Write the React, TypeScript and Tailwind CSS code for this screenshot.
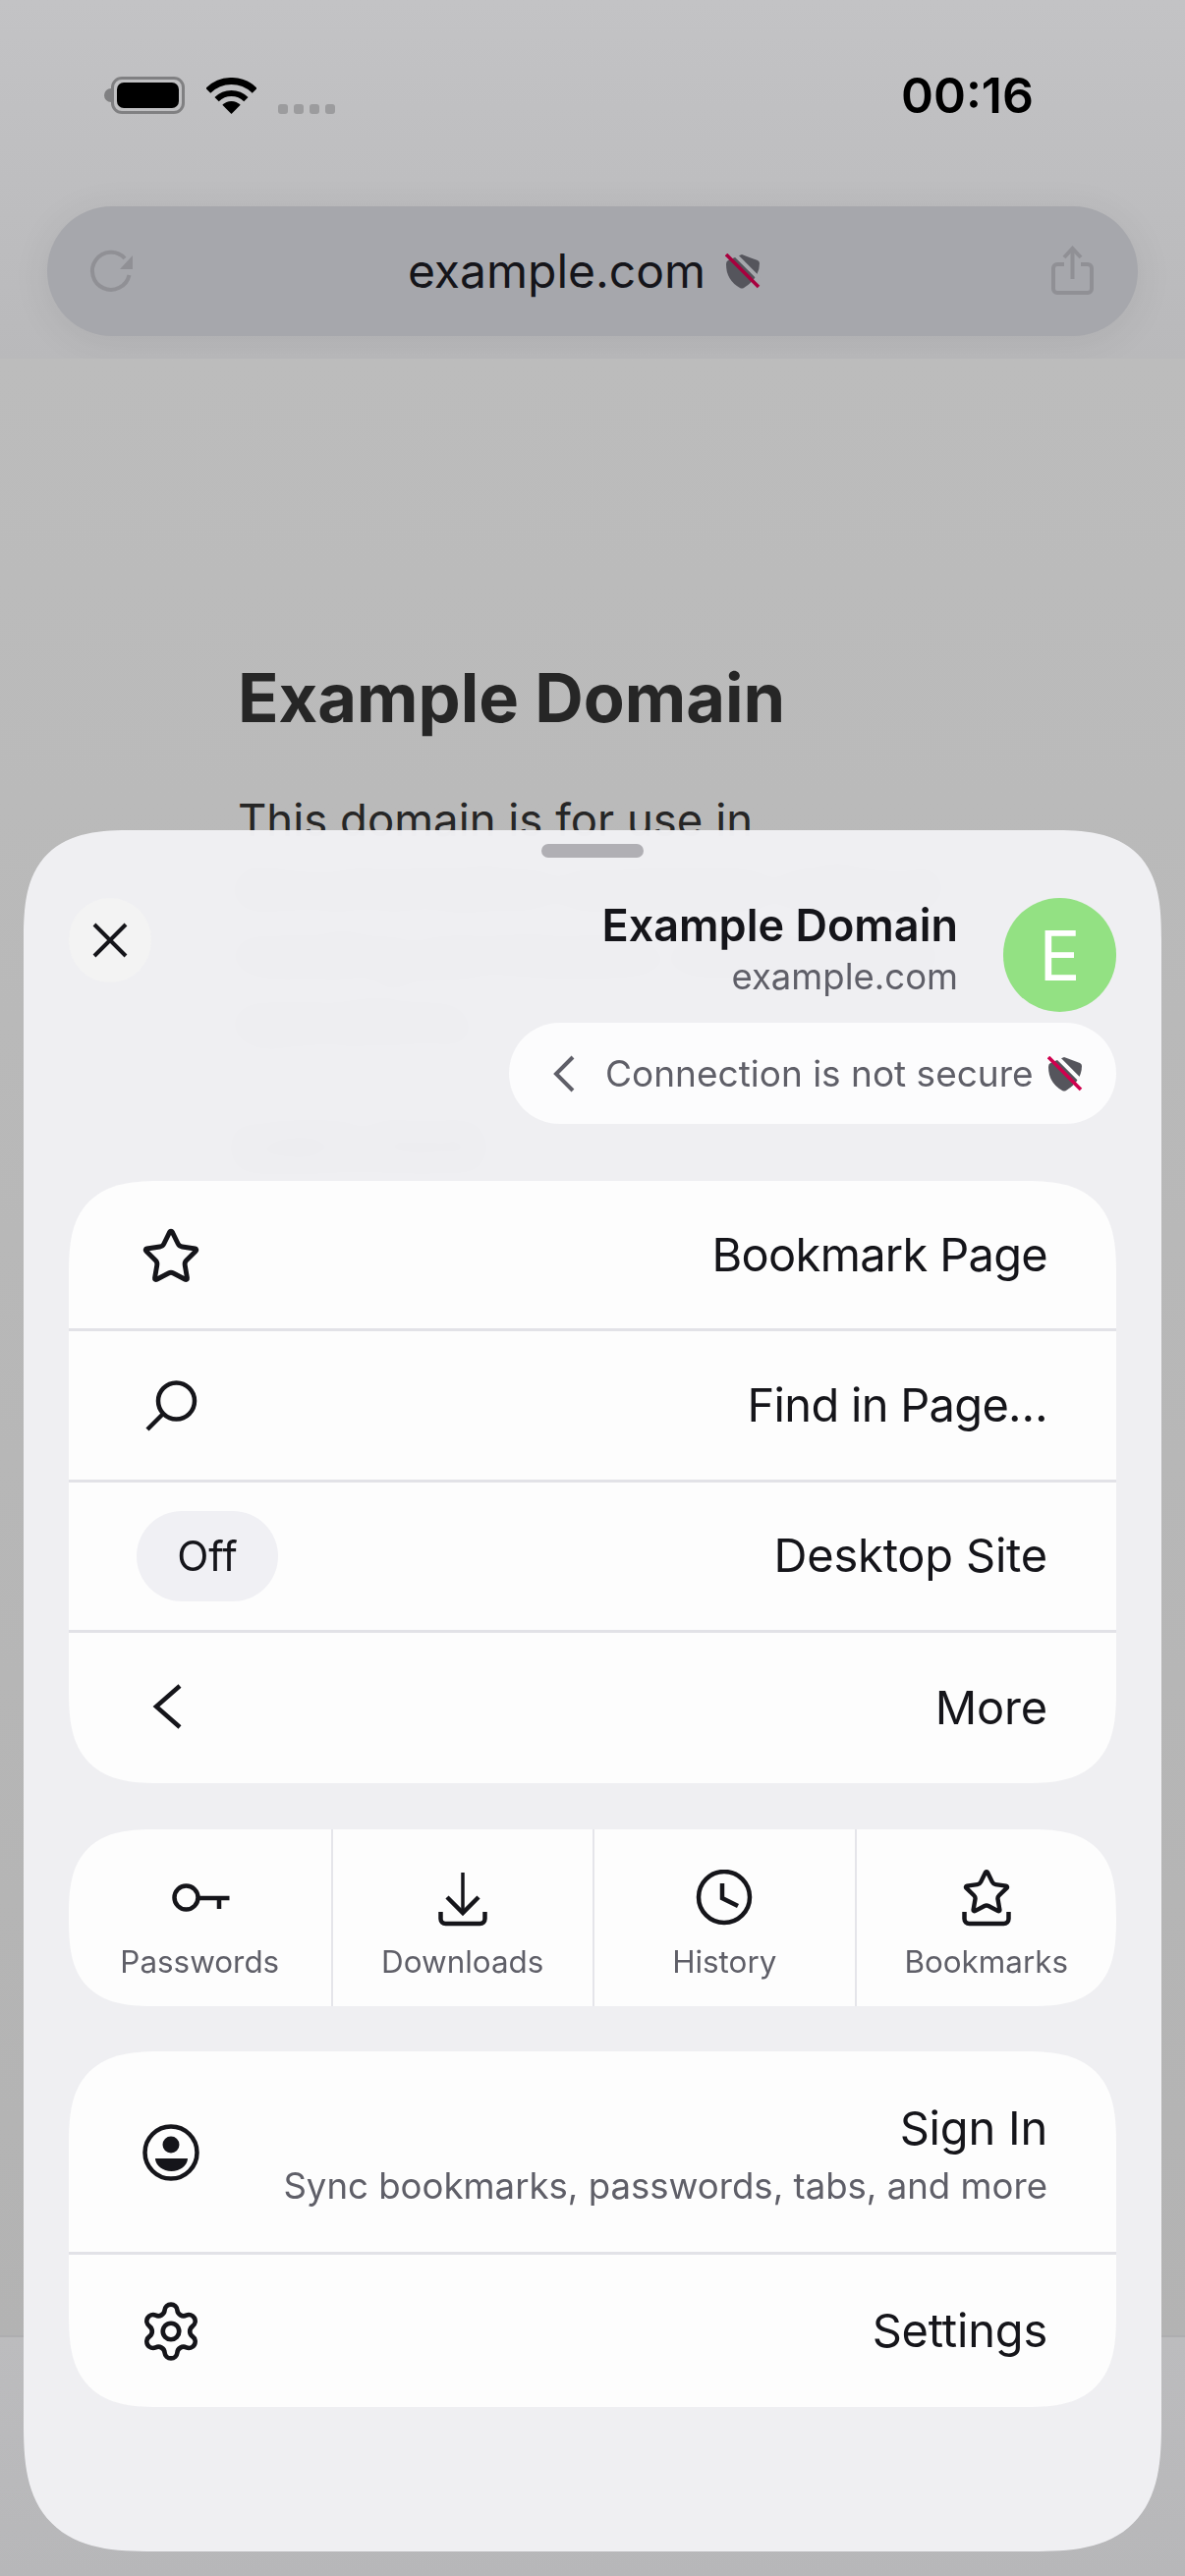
import { Settings, Star } from 'lucide-react';

function ShieldOff({ gap, slash }: { gap: string; slash: string }) {
  return (
    <svg width="36" height="36" viewBox="0 0 36 36" className="shrink-0">
      <path d="M17 1 L33 7 Q35 8 35 10 Q35 25 19 35 Q17 36 15 35 Q1 27 1 11 Q1 8 3 7 Z" fill="#55555c" />
      <line x1="9" y1="0" x2="36" y2="27" stroke={gap} strokeWidth="4" />
      <line x1="1" y1="1" x2="34" y2="34" stroke={slash} strokeWidth="3.6" />
    </svg>
  );
}

function StatusBar() {
  return (
    <div className="flex items-start justify-between pl-[106px] pr-[154px] pt-[78px]">
      <div className="flex items-end">
        {/* battery */}
        <div className="flex items-center">
          <div className="h-[14px] w-[7px] rounded-l-full bg-[#808082]" />
          <div className="flex h-[38px] w-[75px] rounded-[11px] border-[3px] border-[#808082] p-[3px]">
            <div className="flex-1 rounded-[7px] bg-black" />
          </div>
        </div>
        {/* wifi */}
        <svg width="51" height="37" viewBox="0 0 51 37" className="ml-[22px]">
          <path d="M1.8 13.3 A33.5 33.5 0 0 1 49.2 13.3" fill="none" stroke="#000" strokeWidth="7" />
          <path d="M10.6 22.1 A21 21 0 0 1 40.4 22.1" fill="none" stroke="#000" strokeWidth="6" />
          <path d="M25.5 37 L16.3 27.8 A13 13 0 0 1 34.7 27.8 Z" fill="#000" />
        </svg>
        <div className="ml-[22px] flex gap-[6px]">
          <div className="h-[10px] w-[10px] rounded-[3px] bg-[#9c9c9e]" />
          <div className="h-[10px] w-[10px] rounded-[3px] bg-[#9c9c9e]" />
          <div className="h-[10px] w-[10px] rounded-[3px] bg-[#9c9c9e]" />
          <div className="h-[10px] w-[10px] rounded-[3px] bg-[#9c9c9e]" />
        </div>
      </div>
      <span className="text-[50px] font-semibold leading-[38px] text-black">00:16</span>
    </div>
  );
}

function UrlBar() {
  return (
    <div className="mx-[48px] mt-[94px] flex h-[132px] items-center justify-between rounded-full bg-[#a6a7ac] pl-[37px] pr-[38px] shadow-[0_6px_40px_rgba(0,0,0,0.07)]">
      <svg width="60" height="60" viewBox="0 0 60 60">
        <path d="M46.5 34 A19 19 0 1 1 42 17" fill="none" stroke="#909095" strokeWidth="4" />
        <path d="M50 14 V28 H37 Z" fill="#909095" />
      </svg>
      <div className="flex items-center gap-[20px] pr-[20px]">
        <span className="text-[48px] leading-[56px] text-[#15151a]">example.com</span>
        <ShieldOff gap="#a6a7ac" slash="#a8003e" />
      </div>
      <svg width="56" height="56" viewBox="0 0 56 56">
        <g fill="none" stroke="#909095" strokeWidth="4">
          <path d="M27.5 6 V36" />
          <path d="M19 14 L27.5 5 L36 14" />
          <path d="M19 21 H12 a4 4 0 0 0 -4 4 V46 a4 4 0 0 0 4 4 H43 a4 4 0 0 0 4 -4 V25 a4 4 0 0 0 -4 -4 H36" />
        </g>
      </svg>
    </div>
  );
}

function PageBehind() {
  return (
    <div className="flex-1 bg-gradient-to-b from-[#bcbcbc] to-[#b3b3b3] px-[242px] pt-[306px]">
      <h1 className="text-[68.5px] font-bold leading-[80px] text-[#262626]">Example Domain</h1>
      <p className="mt-[50px] w-[760px] text-[45.5px] leading-[68px] text-[#262626]">
        This domain is for use in documentation examples without needing permission. Avoid use in operations.
      </p>
      <p className="mt-[52px] text-[45.5px] leading-[68px] text-[#262626] underline">Learn more</p>
    </div>
  );
}

function MenuRow({ icon, label, last, tight }: { icon: React.ReactNode; label: string; last?: boolean; tight?: boolean }) {
  return (
    <div className={`flex h-[153.25px] items-center justify-between pl-[69px] pr-[70px] ${last ? '' : 'border-b-[3px] border-[#e2e2e7]'}`}>
      {icon}
      <span className={`text-[47px] text-[#15151a] ${tight ? 'tracking-[-0.7px]' : 'tracking-[-0.2px]'}`}>{label}</span>
    </div>
  );
}

function IconBox({ children }: { children: React.ReactNode }) {
  return <div className="flex h-[70px] w-[70px] items-center justify-center">{children}</div>;
}

function SearchIcon() {
  return (
    <svg width="70" height="70" viewBox="0 0 70 70" fill="none" stroke="#15151a" strokeWidth="4.5">
      <circle cx="40.5" cy="31" r="18.5" />
      <line x1="27" y1="44" x2="11" y2="60" />
    </svg>
  );
}

function ChevronIcon() {
  return (
    <svg width="70" height="70" viewBox="0 0 70 70" fill="none" stroke="#15151a" strokeWidth="4.5">
      <path d="M44 13 L20 34 L44 55" />
    </svg>
  );
}

function Shortcut({ label, first, children }: { label: string; first?: boolean; children: React.ReactNode }) {
  return (
    <div className={`flex flex-col items-center pt-[41px] ${first ? '' : 'border-l-2 border-[#e5e5ea]'}`}>
      <svg width="70" height="60" viewBox="0 0 70 60" fill="none" stroke="#15151a" strokeWidth="4.5">
        {children}
      </svg>
      <span className="mt-[14px] text-[31.4px] leading-[40px] text-[#5f5f68]">{label}</span>
    </div>
  );
}

const starPath =
  'M11.525 2.295a.53.53 0 0 1 .95 0l2.31 4.679a2.123 2.123 0 0 0 1.595 1.16l5.166.756a.53.53 0 0 1 .294.904l-3.736 3.638a2.123 2.123 0 0 0-.611 1.878l.882 5.14a.53.53 0 0 1-.771.56l-4.618-2.428a2.122 2.122 0 0 0-1.973 0L6.396 21.01a.53.53 0 0 1-.77-.56l.881-5.139a2.122 2.122 0 0 0-.611-1.879L2.16 9.795a.53.53 0 0 1 .294-.906l5.165-.755a2.122 2.122 0 0 0 1.597-1.16z';

function Sheet() {
  return (
    <div className="absolute left-[24px] top-[845px] h-[1752px] w-[1158px] overflow-hidden rounded-t-[112px] rounded-b-[132px] bg-[#f1f1f4]/97 backdrop-blur-[14px] [corner-shape:superellipse(1.5)]">
      <div className="mx-auto mt-[14px] h-[14px] w-[104px] rounded-full bg-[#b0afb4]" />

      <div className="mt-[41px] flex items-start justify-between px-[46px]">
        <div className="flex h-[86px] w-[84px] items-center justify-center rounded-full bg-[#f3f3f3]">
          <svg width="36" height="36" viewBox="0 0 36 36" fill="none" stroke="#15151a" strokeWidth="4">
            <path d="M2 2 L34 34 M34 2 L2 34" />
          </svg>
        </div>
        <div className="flex flex-col items-end">
          <div className="flex items-start gap-[46px]">
            <div className="flex flex-col items-end">
              <span className="text-[45px] font-semibold leading-[56px] text-[#15151a]">Example Domain</span>
              <span className="text-[36.5px] leading-[48px] text-[#5f5f68]">example.com</span>
            </div>
            <div className="flex h-[116px] w-[115px] items-center justify-center rounded-full bg-[#93e183] text-[70px] text-white">
              E
            </div>
          </div>
          <div className="mt-[11px] flex h-[103px] w-[618px] items-center rounded-full bg-[#fcfcfd] pl-[44px] pr-[34px]">
            <svg width="24" height="40" viewBox="0 0 24 40" fill="none" stroke="#5f5f68" strokeWidth="4">
              <path d="M21 3 L4 20 L21 37" />
            </svg>
            <span className="ml-[30px] flex-1 text-[37px] text-[#5f5f68]">Connection is not secure</span>
            <ShieldOff gap="#fcfcfd" slash="#d0004e" />
          </div>
        </div>
      </div>

      <div className="mx-[46px] mt-[58px] overflow-hidden rounded-[96px] bg-[#fdfdfd] [corner-shape:superellipse(1.5)]">
        <MenuRow
          tight
          label="Bookmark Page"
          icon={
            <IconBox>
              <Star size={62} strokeWidth={1.9} color="#15151a" className="mt-[3px]" />
            </IconBox>
          }
        />
        <MenuRow
          tight
          label="Find in Page…"
          icon={
            <IconBox>
              <SearchIcon />
            </IconBox>
          }
        />
        <MenuRow
          label="Desktop Site"
          icon={
            <div className="flex h-[92px] w-[144px] items-center justify-center rounded-full bg-[#f0f0f4] text-[42px] text-[#15151a]">
              Off
            </div>
          }
        />
        <MenuRow
          last
          label="More"
          icon={
            <IconBox>
              <ChevronIcon />
            </IconBox>
          }
        />
      </div>

      <div className="mx-[46px] mt-[47px] grid h-[180px] grid-cols-4 overflow-hidden rounded-[90px] bg-[#fdfdfd] [corner-shape:superellipse(1.5)]">
        <Shortcut first label="Passwords">
          <circle cx="21.5" cy="28.5" r="12" />
          <path d="M34 29 H65.5 M55 29 V40" />
        </Shortcut>
        <Shortcut label="Downloads">
          <path d="M35 3 V43" strokeWidth="3.5" />
          <path d="M19 28 L35 44 L51 28" />
          <path d="M12.5 43 V50 a5 5 0 0 0 5 5 H52.5 a5 5 0 0 0 5 -5 V43" />
        </Shortcut>
        <Shortcut label="History">
          <circle cx="35" cy="28" r="26" />
          <path d="M33 14 V29 L49 37" />
        </Shortcut>
        <Shortcut label="Bookmarks">
          <path d={starPath} transform="translate(9.8 -2) scale(2.1 2.1)" strokeWidth="2.1" />
          <path d="M12.5 43 V50 a5 5 0 0 0 5 5 H52.5 a5 5 0 0 0 5 -5 V43" />
        </Shortcut>
      </div>

      <div className="mx-[46px] mt-[46px] overflow-hidden rounded-[96px] bg-[#fdfdfd] [corner-shape:superellipse(1.5)]">
        <div className="flex h-[207px] items-center justify-between border-b-[3px] border-[#e2e2e7] pl-[69px] pr-[70px]">
          <svg width="70" height="70" viewBox="0 0 70 70">
            <circle cx="35" cy="36" r="26.5" fill="none" stroke="#15151a" strokeWidth="4.5" />
            <circle cx="35" cy="28" r="8.5" fill="#15151a" />
            <path d="M19 42 H52 C52 49 44 55 35.5 55 C27 55 19 49 19 42 Z" fill="#15151a" />
          </svg>
          <div className="flex flex-col items-end pt-[5px]">
            <span className="text-[47px] leading-[58px] tracking-[-0.2px] text-[#15151a]">Sign In</span>
            <span className="mt-[7px] text-[36.6px] leading-[46px] text-[#5f5f68]">Sync bookmarks, passwords, tabs, and more</span>
          </div>
        </div>
        <div className="flex h-[155px] items-center justify-between pl-[69px] pr-[70px]">
          <IconBox>
            <Settings size={66} strokeWidth={1.7} color="#15151a" />
          </IconBox>
          <span className="text-[47px] tracking-[-0.2px] text-[#15151a]">Settings</span>
        </div>
      </div>
    </div>
  );
}

export default function App() {
  return (
    <div className="relative flex h-[2622px] w-[1206px] flex-col overflow-hidden bg-[#b8b8ba] [font-family:Inter,sans-serif]">
      <div className="h-[365px] bg-gradient-to-b from-[#c3c3c5] to-[#b9b9bb]">
        <StatusBar />
        <UrlBar />
      </div>
      <PageBehind />
      <div className="h-[245px] border-t-2 border-[#aeaeb0] bg-gradient-to-b from-[#bcbcbe] to-[#b7b7b9]" />
      <Sheet />
    </div>
  );
}
